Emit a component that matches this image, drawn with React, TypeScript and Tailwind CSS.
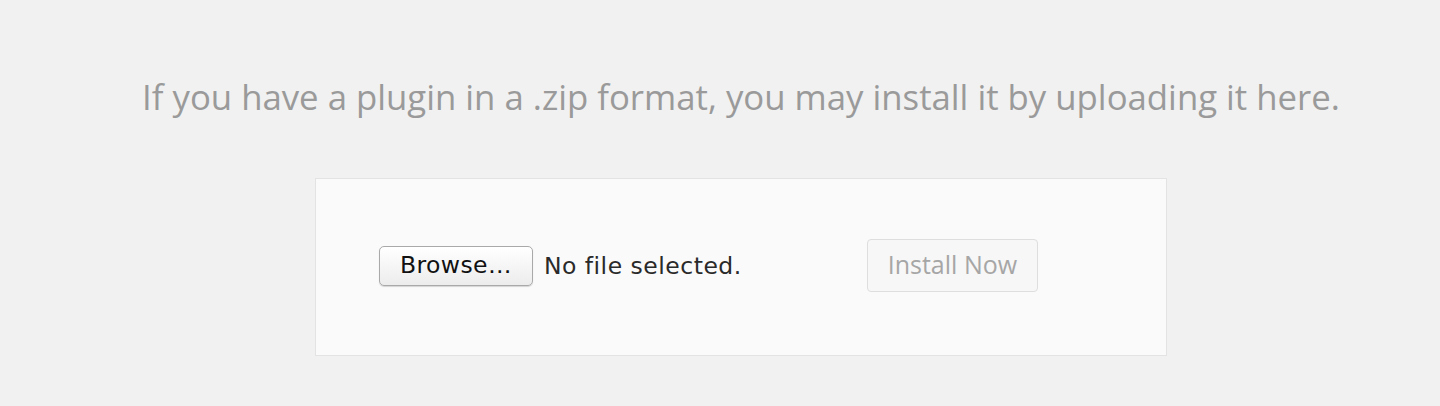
export default function App() {
  return (
    <div className="h-[406px] w-full bg-[#f1f1f1] pl-[42px] pt-[74px] font-['Open_Sans',sans-serif]">
      <div className="flex flex-col items-center">
        <p className="text-[34.75px] leading-[46px] text-[#9a9a9a]">
          If you have a plugin in a .zip format, you may install it by uploading it here.
        </p>

        {/* Upload box */}
        <div className="mt-[58px] flex h-[178px] w-[852px] items-center border border-[#e3e3e3] bg-[#fafafa] pl-[63px]">
          <button className="-mt-[2px] h-[40px] rounded-[5px] border border-[#a9a9a9] bg-gradient-to-b from-white to-[#ececec] px-[20px] font-['DejaVu_Sans',sans-serif] text-[23.5px] tracking-[0.4px] text-[#111] shadow-[0_1px_1px_rgba(0,0,0,0.15)]">
            Browse…
          </button>
          <span className="ml-[11px] font-['DejaVu_Sans',sans-serif] text-[23.5px] tracking-[0.5px] text-[#2a2a2a]">
            No file selected.
          </span>
          <button className="-mt-[4px] ml-[125px] h-[53px] rounded-[4px] border border-[#dedede] bg-[#f7f7f7] px-[20px] text-[25px] text-[#a6a6a6]">
            Install Now
          </button>
        </div>
      </div>
    </div>
  );
}
